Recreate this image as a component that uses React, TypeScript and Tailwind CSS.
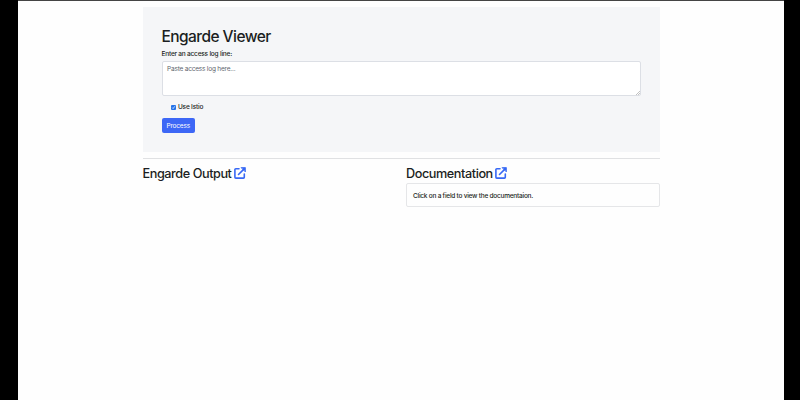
function ExternalLink() {
  return (
    <svg
      viewBox="0 0 12 12"
      className="relative -top-px size-3 text-[#3768f5]"
      fill="none"
      stroke="currentColor"
      strokeWidth="1.6"
      strokeLinecap="round"
      strokeLinejoin="round"
    >
      <path d="M5 1.7H1.8a.9.9 0 0 0-.9.9v7.6a.9.9 0 0 0 .9.9h7.6a.9.9 0 0 0 .9-.9V7" />
      <path d="M4.5 7.5 9.9 2.1" />
      <path d="M7.4.6h4v4z" fill="currentColor" strokeWidth=".8" />
    </svg>
  );
}

export default function App() {
  return (
    <div className="h-[400px] w-[800px] overflow-hidden bg-black pr-4 pl-[18px] font-['Inter','Liberation_Sans',sans-serif] text-[#1b1e22]">
      <div className="h-full border-t border-[#444] bg-[#fefefe] pt-1.5 pr-[124px] pl-[124.5px]">
        <section className="h-[145px] bg-[#f5f6f8] px-[19px] pt-5">
          <h1 className="h-[19px] text-[15.5px] leading-[19px] font-medium tracking-[-0.56px] whitespace-nowrap">Engarde Viewer</h1>
          <label htmlFor="log" className="block h-[15px] pt-[3px] text-[6.5px] leading-[11px] font-[450] tracking-[-0.2px]">
            Enter an access log line:
          </label>
          <div className="relative h-[35px]">
            <textarea
              id="log"
              placeholder="Paste access log here..."
              className="block h-full w-full resize-none rounded-[2px] border border-[#dcdfe5] bg-white px-[4.5px] py-[3px] text-[6.5px] leading-[9px] tracking-[-0.2px] placeholder:text-[#5e656d]"
            />
            <svg viewBox="0 0 4 4" className="absolute right-px bottom-px size-1" stroke="#999" strokeWidth=".6">
              <path d="M0 4 4 0M2 4l2-2" />
            </svg>
          </div>
          <label className="mt-[5px] ml-[9.5px] flex h-[12px] items-center gap-[2px] text-[6.5px] leading-[11px] font-[450] tracking-[-0.2px]">
            <span className="relative mt-px size-[5px]">
              <input type="checkbox" defaultChecked className="block size-[5px] appearance-none rounded-[1px] bg-[#2573e8]" />
              <svg viewBox="0 0 5 5" className="absolute inset-0 size-[5px]" fill="none" stroke="white" strokeWidth=".7">
                <path d="m1.2 2.6.9 1 1.7-2.3" />
              </svg>
            </span>
            Use Istio
          </label>
          <button className="mt-[5px] flex h-[15px] w-[33.5px] items-center justify-center rounded-[2px] bg-[#3d67f6] pt-[2px] text-[6.5px] tracking-[-0.17px] text-white">
            Process
          </button>
        </section>
        <hr className="mt-1.5 border-[#e0e1e3]" />
        <div className="mt-1.5 grid grid-cols-[254px_254px] gap-[9.5px]">
          <section>
            <h2 className="flex h-[18px] items-center gap-[2px] text-[12.7px] font-medium tracking-[-0.44px] whitespace-nowrap">
              Engarde Output <ExternalLink />
            </h2>
          </section>
          <section>
            <h2 className="flex h-[18px] items-center gap-[2px] text-[12.7px] font-medium tracking-[-0.44px] whitespace-nowrap">
              Documentation <ExternalLink />
            </h2>
            <div className="flex h-6 items-center rounded-[2px] border border-[#e5e6e8] px-[6px] pt-[3px] text-[6.5px] font-[450] tracking-[-0.23px]">
              Click on a field to view the documentaion.
            </div>
          </section>
        </div>
      </div>
    </div>
  );
}
